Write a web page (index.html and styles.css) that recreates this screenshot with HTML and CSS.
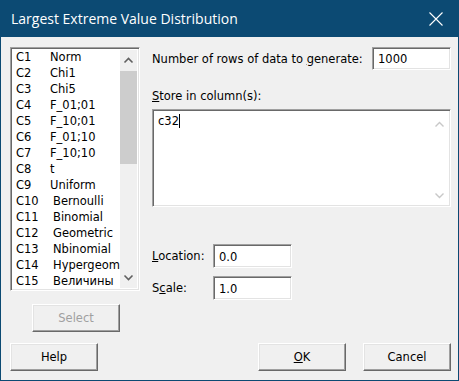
FILE: index.html
```html
<!DOCTYPE html>
<html lang="en">
<head>
  <meta charset="UTF-8" />
  <title>Largest Extreme Value Distribution</title>
  <link rel="stylesheet" href="styles.css">
</head>
<body>
  <div class="window">
    <div class="titlebar">
      <span class="title">Largest Extreme Value Distribution</span>
      <svg class="close" width="14" height="14" viewBox="0 0 14 14">
        <path d="M0.5 0.5 L13.5 13.5 M13.5 0.5 L0.5 13.5" stroke="#fff" stroke-width="1.1" fill="none"/>
      </svg>
    </div>

    <div class="dialog-body">
      <div class="left">
        <div class="listbox">
          <div class="items">
            <div class="item"><span class="cn">C1</span>Norm</div>
            <div class="item"><span class="cn">C2</span>Chi1</div>
            <div class="item"><span class="cn">C3</span>Chi5</div>
            <div class="item"><span class="cn">C4</span>F_01;01</div>
            <div class="item"><span class="cn">C5</span>F_10;01</div>
            <div class="item"><span class="cn">C6</span>F_01;10</div>
            <div class="item"><span class="cn">C7</span>F_10;10</div>
            <div class="item"><span class="cn">C8</span>t</div>
            <div class="item"><span class="cn">C9</span>Uniform</div>
            <div class="item"><span class="cn wide">C10</span>Bernoulli</div>
            <div class="item"><span class="cn wide">C11</span>Binomial</div>
            <div class="item"><span class="cn wide">C12</span>Geometric</div>
            <div class="item"><span class="cn wide">C13</span>Nbinomial</div>
            <div class="item"><span class="cn wide">C14</span>Hypergeom</div>
            <div class="item"><span class="cn wide">C15</span>Величины</div>
          </div>
          <div class="scrollbar">
            <svg class="arrow" width="17" height="17" viewBox="0 0 17 17">
              <path d="M4.5 10.5 L8.5 6.5 L12.5 10.5" stroke="#606060" stroke-width="1.6" fill="none"/>
            </svg>
            <div class="thumb"></div>
            <div class="track"></div>
            <svg class="arrow" width="17" height="17" viewBox="0 0 17 17">
              <path d="M4.5 6.5 L8.5 10.5 L12.5 6.5" stroke="#606060" stroke-width="1.6" fill="none"/>
            </svg>
          </div>
        </div>
        <button class="btn select" disabled>Select</button>
      </div>

      <div class="right">
        <div class="rows-line">
          <span class="label">Number of rows of data to <u>g</u>enerate:</span>
          <div class="field rows-field">1000</div>
        </div>

        <div class="label store-label"><u>S</u>tore in column(s):</div>
        <div class="field textarea">
          <div class="text">c32<span class="caret"></span></div>
          <div class="tscroll">
            <svg width="17" height="17" viewBox="0 0 17 17">
              <path d="M4.5 10.5 L8.5 6.5 L12.5 10.5" stroke="#c8c8c8" stroke-width="1.4" fill="none"/>
            </svg>
            <svg width="17" height="17" viewBox="0 0 17 17">
              <path d="M4.5 6.5 L8.5 10.5 L12.5 6.5" stroke="#c8c8c8" stroke-width="1.4" fill="none"/>
            </svg>
          </div>
        </div>

        <div class="param-line first">
          <span class="label param-label"><u>L</u>ocation:</span>
          <div class="field param-field">0.0</div>
        </div>
        <div class="param-line">
          <span class="label param-label">S<u>c</u>ale:</span>
          <div class="field param-field">1.0</div>
        </div>
      </div>
    </div>

    <div class="footer">
      <button class="btn">Help</button>
      <div class="footer-right">
        <button class="btn"><u>O</u>K</button>
        <button class="btn">Cancel</button>
      </div>
    </div>
  </div>
</body>
</html>
```

FILE: styles.css
```css
body {
  margin: 0;
  padding: 0;
  background-color: #f0f0f0;
  font-family: Tahoma, 'DejaVu Sans', sans-serif;
  font-size: 11.5px;
  color: #000;
}

.window {
  width: 459px;
  height: 381px;
  box-sizing: border-box;
  border: 1px solid #0c4a73;
  border-top: none;
  background-color: #f0f0f0;
  display: flex;
  flex-direction: column;
}

.titlebar {
  height: 37px;
  background-color: #0c4a73;
  display: flex;
  align-items: center;
  justify-content: space-between;
  padding: 0 16px 0 11px;
  margin: 0 -1px;
}

.title {
  color: #fff;
  font-family: 'Open Sans', 'Noto Sans', sans-serif;
  font-size: 14px;
}

.dialog-body {
  display: flex;
  padding: 10px 7px 0 9px;
  gap: 12px;
}

.left {
  width: 130px;
  display: flex;
  flex-direction: column;
}

.listbox {
  height: 244px;
  box-sizing: border-box;
  background-color: #fff;
  border: 1px solid;
  border-color: #a0a0a0 #fff #fff #a0a0a0;
  box-shadow: inset 1px 1px #696969, inset -1px -1px #e3e3e3;
  padding: 1px 2px 1px 2px;
  display: flex;
  overflow: hidden;
}

.items {
  flex: 1;
  padding: 0 0 0 3px;
  overflow: hidden;
  white-space: nowrap;
}

.item {
  height: 16px;
  line-height: 16px;
}

.cn {
  display: inline-block;
  width: 34px;
}

.cn.wide {
  width: 37px;
}

.scrollbar {
  width: 17px;
  margin: 1px 0;
  background-color: #f0f0f0;
  display: flex;
  flex-direction: column;
}

.arrow {
  display: block;
  flex: none;
  margin: 2px 0;
}

.thumb {
  height: 93px;
  background-color: #cdcdcd;
}

.track {
  flex: 1;
}

.btn {
  width: 88px;
  height: 28px;
  box-sizing: border-box;
  background-color: #f0f0f0;
  font-family: inherit;
  font-size: 11.5px;
  color: #000;
  border: 1px solid;
  border-color: #fff #696969 #696969 #fff;
  box-shadow: inset -1px -1px #a0a0a0, inset 1px 1px #e3e3e3;
  padding: 0;
}

.btn.select {
  margin: 13px 0 0 22px;
  color: #a0a0a0;
}

.right {
  flex: 1;
  display: flex;
  flex-direction: column;
}

.field {
  box-sizing: border-box;
  background-color: #fff;
  border: 1px solid;
  border-color: #a0a0a0 #fff #fff #a0a0a0;
  box-shadow: inset 1px 1px #696969, inset -1px -1px #e3e3e3;
  padding: 0 5px;
  display: flex;
  align-items: center;
}

.rows-line {
  display: flex;
  justify-content: space-between;
  align-items: center;
}

.rows-field {
  width: 79px;
  height: 23px;
  padding-top: 1px;
}

.store-label {
  margin: 19px 0 6px;
}

.textarea {
  height: 98px;
  align-items: stretch;
  padding: 4px 2px 2px 5px;
}

.text {
  flex: 1;
  line-height: 14px;
}

.caret {
  display: inline-block;
  width: 1px;
  height: 14px;
  background-color: #000;
  vertical-align: top;
}

.tscroll {
  width: 17px;
  display: flex;
  flex-direction: column;
  justify-content: space-between;
  margin: 2px 0 0;
}

.tscroll svg {
  display: block;
}

.param-line {
  display: flex;
  align-items: center;
  margin-top: 8px;
}

.param-line.first {
  margin-top: 37px;
}

.param-label {
  width: 61px;
}

.param-field {
  width: 79px;
  height: 24px;
  padding-top: 1px;
}

.footer {
  display: flex;
  justify-content: space-between;
  padding: 11px 7px 0 9px;
}

.footer-right {
  display: flex;
  gap: 17px;
}
```
